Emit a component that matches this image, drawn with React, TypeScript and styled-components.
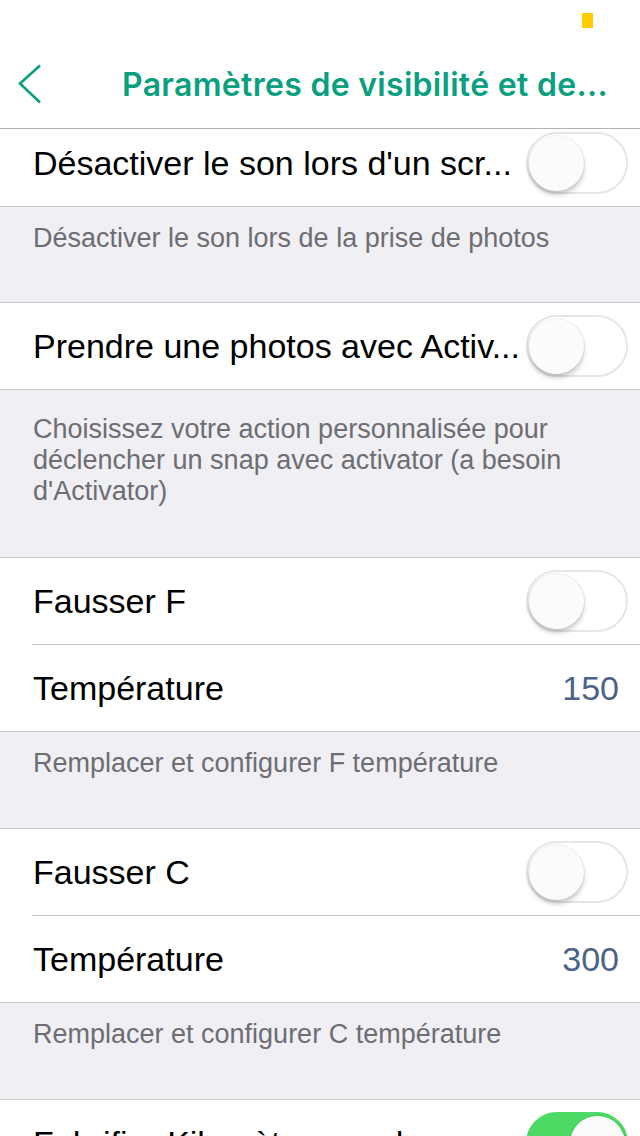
import React from "react";
import styled, { createGlobalStyle } from "styled-components";

const GlobalStyle = createGlobalStyle`
  html, body {
    margin: 0;
    padding: 0;
    background: #efeff4;
    font-family: "Liberation Sans", Arial, sans-serif;
    -webkit-font-smoothing: antialiased;
  }
  * { box-sizing: border-box; }
`;

const Screen = styled.div`
  width: 640px;
  height: 1136px;
  overflow: hidden;
  display: flex;
  flex-direction: column;
  background: #efeff4;
`;

const Header = styled.header`
  background: #fff;
  border-bottom: 1px solid #b2b2b2;
  flex-shrink: 0;
  position: relative;
  z-index: 1;
`;

const StatusBar = styled.div`
  height: 40px;
  display: flex;
  justify-content: flex-end;
  align-items: flex-start;
  padding: 13px 47px 0 0;
`;

const BatteryFill = styled.div`
  width: 11px;
  height: 15px;
  background: #ffcc00;
`;

const NavBar = styled.div`
  height: 88px;
  display: flex;
  align-items: center;
  padding: 0 20px 0 17px;
`;

const Back = styled.svg`
  flex-shrink: 0;
  display: block;
`;

const Title = styled.h1`
  margin: 0 0 0 80px;
  flex: 1;
  min-width: 0;
  font-family: Inter, "Liberation Sans", sans-serif;
  font-size: 32px;
  font-weight: 600;
  letter-spacing: 0.3px;
  color: #0aa07f;
  white-space: nowrap;
  overflow: hidden;
`;

const Content = styled.main`
  flex: 1;
  overflow: hidden;
`;

const Group = styled.section<{ $clipped?: boolean }>`
  background: #fff;
  border-top: ${(p) => (p.$clipped ? "none" : "1px solid #c8c7cc")};
  border-bottom: 1px solid #c8c7cc;
`;

const Row = styled.div<{ $height?: number; $shift?: number }>`
  height: ${(p) => p.$height ?? 86}px;
  padding: 0 12px ${(p) => p.$shift ?? 0}px 33px;
  display: flex;
  align-items: center;
  gap: 6px;
`;

const Label = styled.span`
  flex: 1;
  min-width: 0;
  font-size: 34px;
  color: #000;
  white-space: nowrap;
  overflow: hidden;
`;

const Value = styled.span`
  font-size: 34px;
  color: #4a6388;
  margin-right: 9px;
`;

const Divider = styled.div`
  height: 1px;
  margin-left: 32px;
  background: #c8c7cc;
`;

const Footer = styled.p<{ $top?: number; $bottom?: number }>`
  margin: 0;
  padding: ${(p) => p.$top ?? 16}px 30px ${(p) => p.$bottom ?? 48}px 33px;
  font-size: 27px;
  line-height: 31px;
  color: #6d6d72;
`;

const SwitchTrack = styled.div<{ $on?: boolean }>`
  width: 102px;
  height: 62px;
  flex-shrink: 0;
  border-radius: 31px;
  padding: 1px;
  background: ${(p) => (p.$on ? "#4cd964" : "#fff")};
  border: 2px solid ${(p) => (p.$on ? "#4cd964" : "#e5e5ea")};
  display: flex;
  justify-content: ${(p) => (p.$on ? "flex-end" : "flex-start")};
  align-items: center;
`;

const SwitchKnob = styled.div`
  width: 55px;
  height: 55px;
  border-radius: 50%;
  background: #fbfbfb;
  box-shadow: 0 4px 5px rgba(0, 0, 0, 0.2), 0 0 0 1px rgba(0, 0, 0, 0.06);
`;

const Switch = ({ on }: { on?: boolean }) => (
  <SwitchTrack $on={on}>
    <SwitchKnob />
  </SwitchTrack>
);

export default function App() {
  return (
    <>
      <GlobalStyle />
      <Screen>
        <Header>
          <StatusBar>
            <BatteryFill />
          </StatusBar>
          <NavBar>
            <Back width="25" height="40" viewBox="0 0 25 40">
              <path
                d="M23 1.5 L3 19.5 L23 38.5"
                fill="none"
                stroke="#0aa07f"
                strokeWidth="2.6"
                strokeLinecap="butt"
                strokeLinejoin="miter"
              />
            </Back>
            <Title>Paramètres de visibilité et de...</Title>
          </NavBar>
        </Header>
        <Content>
          <Group $clipped>
            <Row $height={77} $shift={9}>
              <Label>Désactiver le son lors d'un scr...</Label>
              <Switch />
            </Row>
          </Group>
          <Footer>Désactiver le son lors de la prise de photos</Footer>

          <Group>
            <Row>
              <Label>Prendre une photos avec Activ...</Label>
              <Switch />
            </Row>
          </Group>
          <Footer $top={24} $bottom={50}>
            Choisissez votre action personnalisée pour déclencher un snap avec
            activator (a besoin d'Activator)
          </Footer>

          <Group>
            <Row>
              <Label>Fausser F</Label>
              <Switch />
            </Row>
            <Divider />
            <Row>
              <Label>Température</Label>
              <Value>150</Value>
            </Row>
          </Group>
          <Footer $bottom={49}>Remplacer et configurer F température</Footer>

          <Group>
            <Row>
              <Label>Fausser C</Label>
              <Switch />
            </Row>
            <Divider />
            <Row>
              <Label>Température</Label>
              <Value>300</Value>
            </Row>
          </Group>
          <Footer $bottom={49}>Remplacer et configurer C température</Footer>

          <Group>
            <Row>
              <Label>Fahrifier Kilomètres par h...</Label>
              <Switch on />
            </Row>
          </Group>
        </Content>
      </Screen>
    </>
  );
}
